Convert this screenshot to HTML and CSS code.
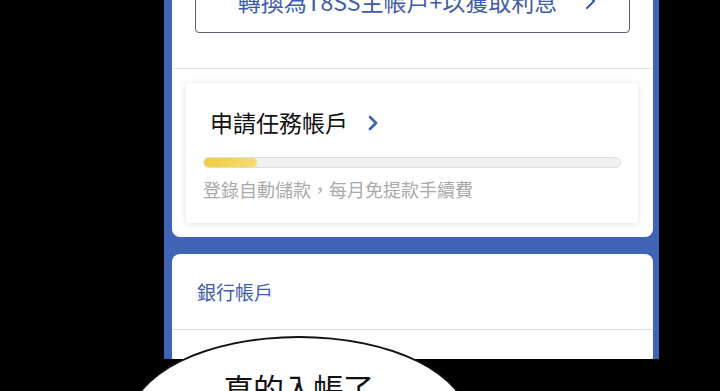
FILE: index.html
```html
<!DOCTYPE html>
<html lang="zh-Hant">
<head>
  <meta charset="UTF-8" />
  <title>帳戶</title>
  <meta name="viewport" content="width=device-width, initial-scale=1.0" />
  <link rel="stylesheet" href="styles.css">
</head>
<body>

  <div class="phone">
    <!-- Top card -->
    <div class="card top-card">
      <div class="convert-wrap">
        <button class="convert-btn">
          <span>轉換為T8SS主帳戶+以獲取利息</span>
          <svg class="chev" width="14" height="18" viewBox="0 0 14 18"><path d="M4 2 L11 9 L4 16" fill="none" stroke="#3d5daa" stroke-width="2.2" stroke-linecap="round" stroke-linejoin="round"/></svg>
        </button>
      </div>
      <div class="task-area">
        <div class="task-card">
          <div class="task-title">
            申請任務帳戶
            <svg class="title-chev" width="12" height="16" viewBox="0 0 12 16"><path d="M3 2 L9 8 L3 14" fill="none" stroke="#3f62b4" stroke-width="2.8" stroke-linecap="round" stroke-linejoin="round"/></svg>
          </div>
          <div class="progress"><div class="progress-fill" style="width: 53px"></div></div>
          <p class="task-note">登錄自動儲款，每月免提款手續費</p>
        </div>
      </div>
    </div>

    <!-- Bank card -->
    <div class="card bank-card">
      <div class="bank-head">銀行帳戶</div>
      <div class="bank-row"></div>
    </div>
  </div>

  <!-- Speech bubble -->
  <div class="bubble">
    <span>真的入帳了</span>
  </div>

</body>
</html>
```

FILE: styles.css
```css
html, body, p {
  margin: 0;
  padding: 0;
}

html, body {
  height: 391px;
  overflow: hidden;
}

body {
  background: #000;
  font-family: 'Noto Sans CJK TC', 'Noto Sans', sans-serif;
  padding-left: 164px;
  position: relative;
}

.phone {
  width: 481px;
  height: 359px;
  background: #3f63b5;
  padding: 0 6px 0 8px;
  overflow: hidden;
}

.card {
  background: #fff;
  border-radius: 8px;
}

.top-card {
  margin-top: -40px;
  height: 277px;
  display: flex;
  flex-direction: column;
}

.convert-wrap {
  padding: 9px 23px 0 23px;
  height: 109px;
  border-bottom: 1px solid #e4e4e6;
  box-sizing: border-box;
  flex-shrink: 0;
}

.convert-btn {
  width: 435px;
  height: 64px;
  background: #fff;
  border: 1px solid #5a6070;
  border-radius: 4px;
  display: flex;
  align-items: center;
  justify-content: center;
  gap: 26px;
  font-family: inherit;
  font-size: 23px;
  color: #3d5daa;
  padding: 0 0 0 10px;
}

.task-area {
  padding: 14px 15px 14px 14px;
}

.task-card {
  background: #fff;
  border-radius: 3px;
  box-shadow: 0 1px 7px rgba(0, 0, 0, 0.13);
  padding: 24px 17px 21px 17px;
  height: 140px;
  box-sizing: border-box;
}

.task-title {
  display: flex;
  align-items: center;
  gap: 19px;
  font-size: 23px;
  line-height: 30px;
  color: #111;
  margin-left: 7px;
  height: 30px;
}

.title-chev {
  margin-top: 2px;
}

.progress {
  margin-top: 20px;
  height: 11px;
  background: #f1f1f1;
  border: 1px solid #dedede;
  border-radius: 6px;
  box-sizing: border-box;
  overflow: hidden;
}

.progress-fill {
  height: 100%;
  background: linear-gradient(90deg, #f0cc45, #f6dc6e);
  border-radius: 6px;
}

.task-note {
  margin-top: 9px;
  font-size: 18px;
  line-height: 24px;
  color: #a9a9a9;
}

.bank-card {
  margin-top: 17px;
  height: 110px;
}

.bank-head {
  height: 75px;
  display: flex;
  align-items: center;
  padding-left: 25px;
  font-size: 19px;
  color: #3b5eae;
  border-bottom: 1px solid #dcdcdc;
}

.bubble {
  position: absolute;
  left: 129px;
  top: 336px;
  width: 340px;
  height: 170px;
  background: #fff;
  border: 2px solid #111;
  border-radius: 50%;
  box-sizing: border-box;
  padding: 33px 0 0 92px;
}

.bubble span {
  font-size: 31px;
  line-height: 34px;
  color: #111;
  letter-spacing: -1px;
}
```
